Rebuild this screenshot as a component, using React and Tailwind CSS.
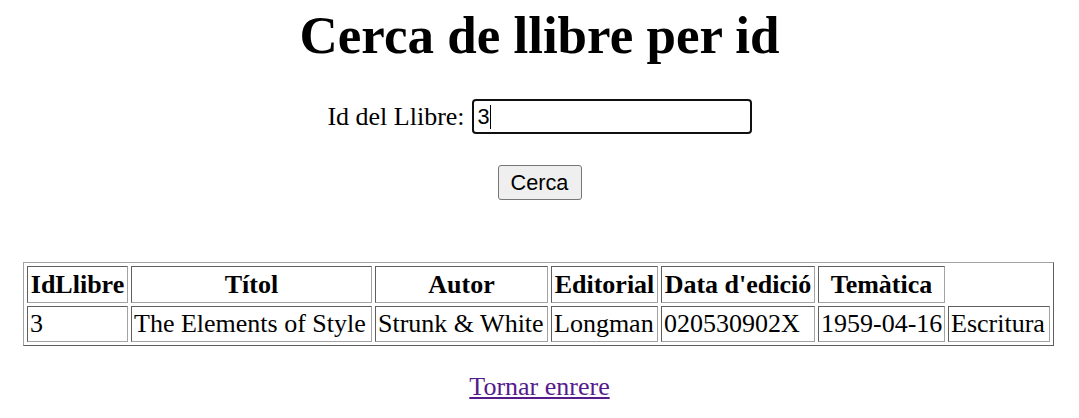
import React from 'react';

const headers = ['IdLlibre', 'Títol', 'Autor', 'Editorial', "Data d'edició", 'Temàtica'];
const row = ['3', 'The Elements of Style', 'Strunk & White', 'Longman', '020530902X', '1959-04-16', 'Escritura'];
const widths = ['w-[101px]', 'w-[241px]', 'w-[173px]', 'w-[107px]', 'w-[154px]', 'w-[127px]', 'w-[102px]'];

const cellBorder = 'border border-t-[#5f5f5f] border-l-[#5f5f5f] border-b-[#a3a3a3] border-r-[#a3a3a3] px-[2px]';

const App = () => {
  return (
    <div className="min-h-screen bg-white text-black flex flex-col items-center font-['Liberation_Serif',_'Times_New_Roman',_serif] text-[26px] leading-[30px]">
      {/* Title */}
      <h1 className="mt-[5px] text-[53px] leading-[60px] font-bold">Cerca de llibre per id</h1>

      {/* Search form */}
      <div className="mt-[34px] h-[35px] flex items-center">
        <label>Id del Llibre:</label>
        <div className="ml-[7px] w-[280px] h-[35px] border-[2.5px] border-[#101010] rounded-[4px] bg-white flex items-center pl-[4px] font-['Liberation_Sans',_Arial,_sans-serif] text-[21.7px]">
          <span>3</span>
          <span className="w-px h-[24px] bg-black" />
        </div>
      </div>
      <button
        type="button"
        className="mt-[31px] w-[84px] h-[35px] bg-[#efefef] border border-[#767676] rounded-[3px] font-['Liberation_Sans',_Arial,_sans-serif] text-[21.7px] leading-none"
      >
        Cerca
      </button>

      {/* Results table */}
      <table className="mt-[62px] mr-[2px] w-[1031px] table-fixed border-separate border-spacing-[3px] border border-t-[#a3a3a3] border-l-[#a3a3a3] border-b-[#5f5f5f] border-r-[#5f5f5f]">
        <colgroup>
          {widths.map((w, i) => (
            <col key={i} className={w} />
          ))}
        </colgroup>
        <tbody>
          <tr className="h-[37px]">
            {headers.map((h) => (
              <th key={h} className={`${cellBorder} font-bold text-center align-middle whitespace-nowrap`}>
                {h}
              </th>
            ))}
          </tr>
          <tr className="h-[36px]">
            {row.map((c, i) => (
              <td key={i} className={`${cellBorder} text-left align-middle whitespace-nowrap`}>
                {c}
              </td>
            ))}
          </tr>
        </tbody>
      </table>

      <a href="#" className="mt-[26px] text-[#551a8b] underline">
        Tornar enrere
      </a>
    </div>
  );
};

export default App;
